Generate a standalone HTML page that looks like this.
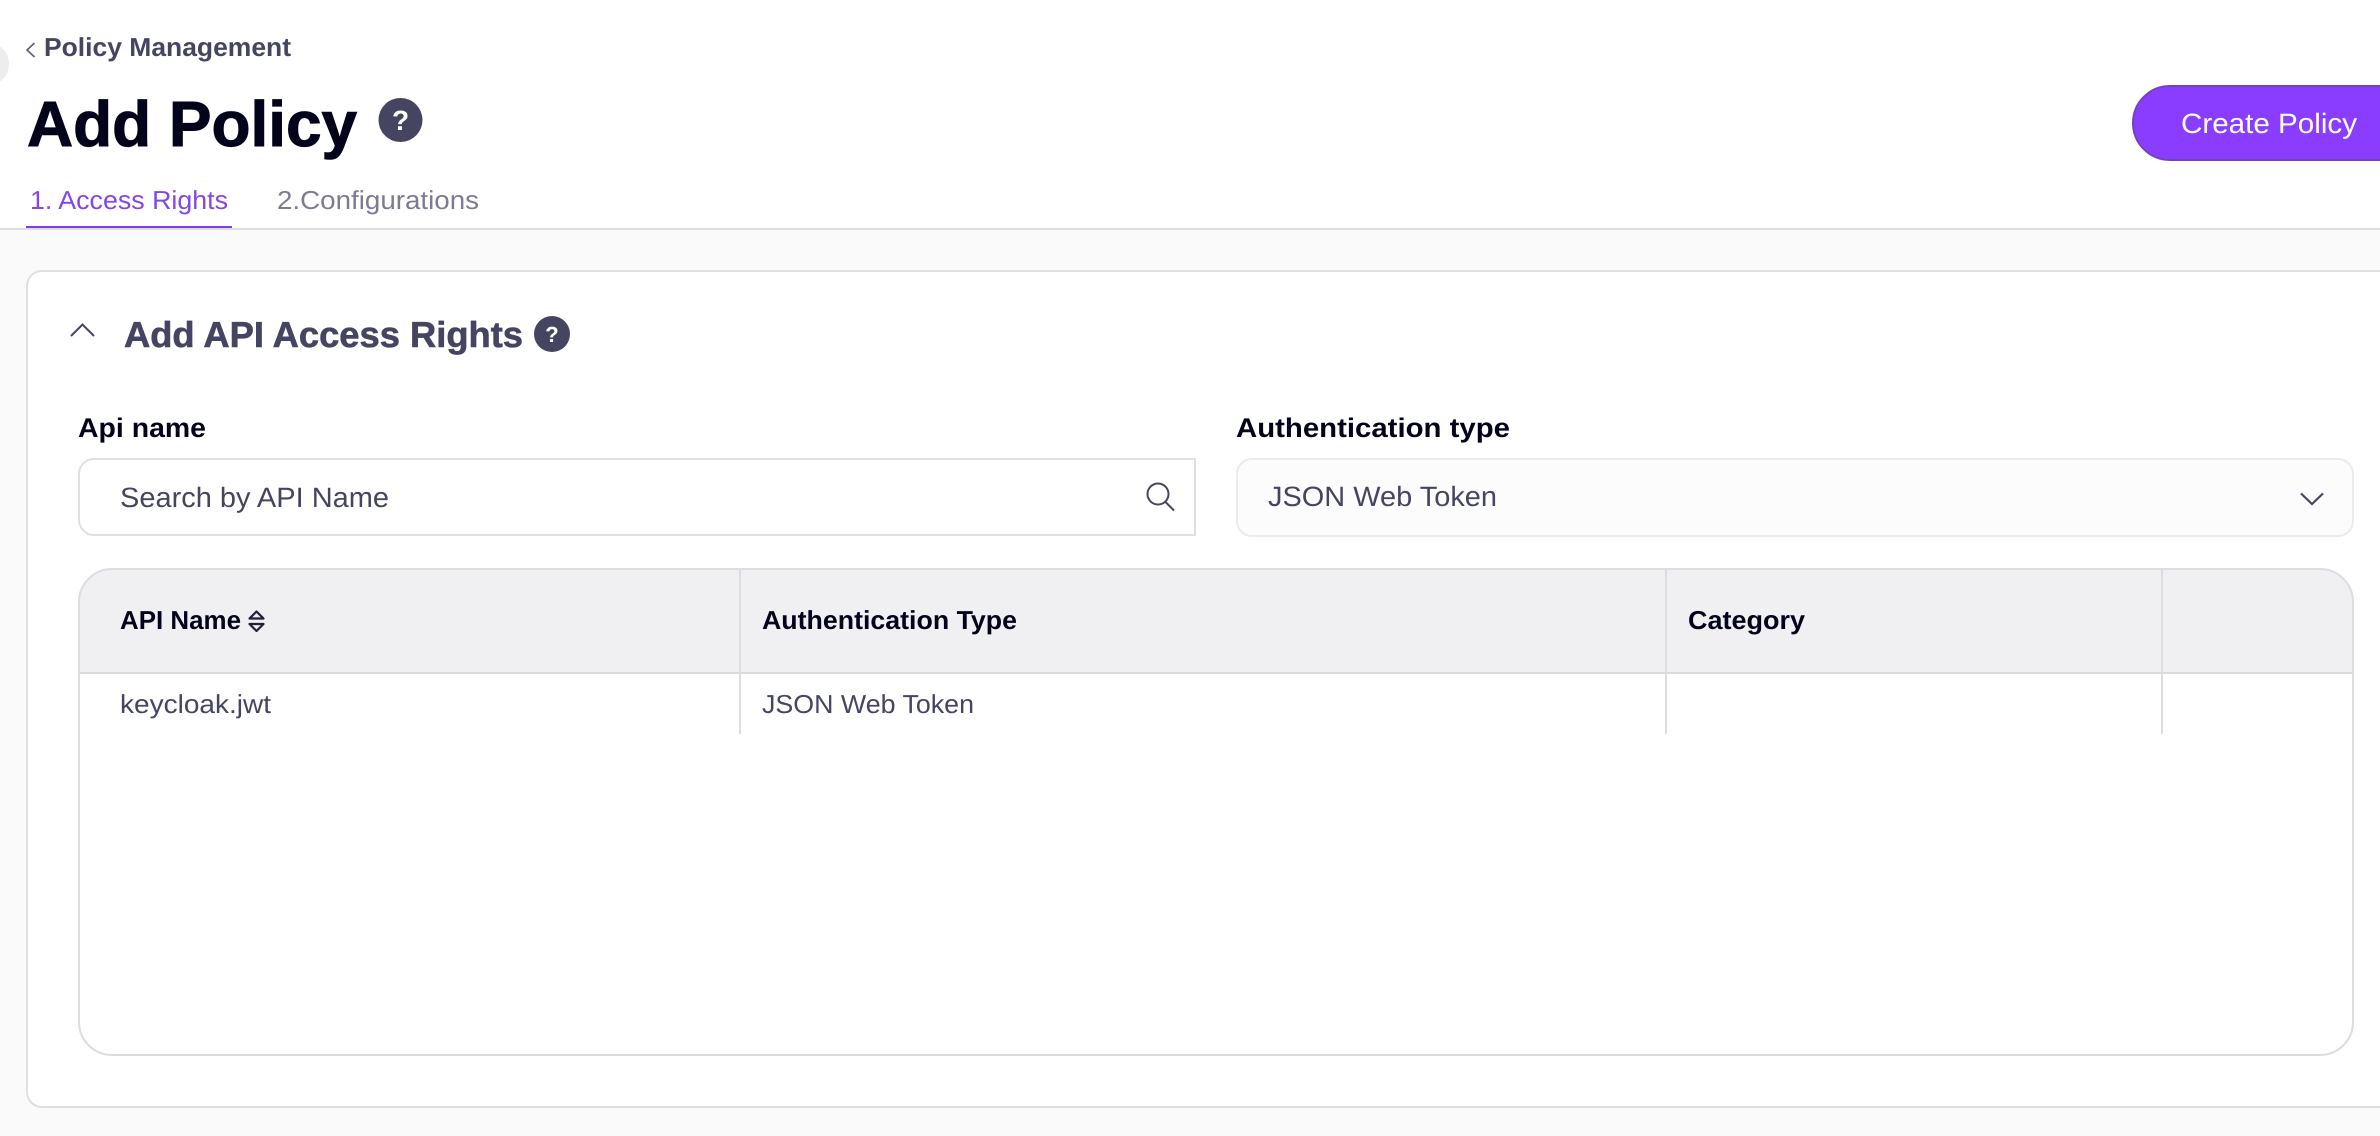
<!DOCTYPE html>
<html lang="en">
<head>
<meta charset="utf-8">
<title>Add Policy</title>
<style>
html,body{margin:0;padding:0;background:#fafafb;width:2380px;height:1136px;overflow:hidden}
svg{display:block}
text{font-family:"Liberation Sans",Arial,sans-serif;text-rendering:geometricPrecision}
</style>
</head>
<body>
<svg xmlns="http://www.w3.org/2000/svg" width="2380" height="1136" viewBox="0 0 2380 1136">
  <rect width="2380" height="1136" fill="#fafafb"/>
  <rect width="2380" height="229" fill="#ffffff"/>
  <rect x="0" y="228" width="2380" height="2" fill="#dcdce1"/>
  <circle cx="-13" cy="64" r="22" fill="#ededf0"/>

  <path d="M34.5 43 L27 50 L34.5 57" fill="none" stroke="#5a5a74" stroke-width="1.6"/>
  <text x="44" y="56" font-size="26" font-weight="700" fill="#454562" textLength="247" lengthAdjust="spacingAndGlyphs">Policy Management</text>

  <text x="27" y="146" font-size="64" font-weight="700" fill="#03031c" stroke="#03031c" stroke-width="1" textLength="330" lengthAdjust="spacingAndGlyphs">Add Policy</text>
  <circle cx="400.5" cy="120" r="22" fill="#454562"/>
  <text x="400.5" y="130" font-size="28" font-weight="700" fill="#ffffff" text-anchor="middle">?</text>

  <rect x="2133" y="86" width="300" height="74" rx="37" fill="#8b3dff" stroke="#7440c4" stroke-width="2"/>
  <text x="2181" y="133" font-size="28" fill="#ffffff" textLength="176" lengthAdjust="spacingAndGlyphs">Create Policy</text>

  <text x="30" y="209" font-size="26" fill="#8347e6" textLength="198" lengthAdjust="spacingAndGlyphs">1. Access Rights</text>
  <text x="277" y="209" font-size="26" fill="#7d7a92" textLength="202" lengthAdjust="spacingAndGlyphs">2.Configurations</text>
  <rect x="26" y="226" width="206" height="2" fill="#7c3ee0"/>

  <rect x="27" y="271" width="2500" height="836" rx="15" fill="#ffffff" stroke="#dfdfe4" stroke-width="2"/>
  <path d="M71 336 L82.5 324.5 L94 336" fill="none" stroke="#454562" stroke-width="2"/>
  <text x="124" y="347" font-size="36" font-weight="700" fill="#454562" stroke="#454562" stroke-width="0.6" textLength="399" lengthAdjust="spacingAndGlyphs">Add API Access Rights</text>
  <circle cx="552" cy="334" r="18" fill="#454562"/>
  <text x="552" y="342" font-size="22" font-weight="700" fill="#ffffff" text-anchor="middle">?</text>

  <text x="78" y="437" font-size="27" font-weight="700" fill="#03031c" textLength="128" lengthAdjust="spacingAndGlyphs">Api name</text>
  <path d="M1195 459 H94 A15 15 0 0 0 79 474 V520 A15 15 0 0 0 94 535 H1195 Z" fill="#ffffff" stroke="#e0e0e4" stroke-width="2"/>
  <text x="120" y="507" font-size="28" fill="#454562" textLength="269" lengthAdjust="spacingAndGlyphs">Search by API Name</text>
  <circle cx="1158" cy="494" r="10.5" fill="none" stroke="#454562" stroke-width="2"/>
  <path d="M1165.5 502 L1174 510.5" fill="none" stroke="#454562" stroke-width="2"/>

  <text x="1236" y="437" font-size="27" font-weight="700" fill="#03031c" textLength="274" lengthAdjust="spacingAndGlyphs">Authentication type</text>
  <rect x="1237" y="459" width="1116" height="77" rx="15" fill="#fcfcfd" stroke="#ebebee" stroke-width="2"/>
  <text x="1268" y="506" font-size="28" fill="#454562" textLength="229" lengthAdjust="spacingAndGlyphs">JSON Web Token</text>
  <path d="M2301 493.5 L2312 504 L2323 493.5" fill="none" stroke="#454562" stroke-width="2.2"/>

  <rect x="79" y="569" width="2274" height="486" rx="33" fill="#ffffff"/>
  <path d="M79 673 V602 A33 33 0 0 1 112 569 H2320 A33 33 0 0 1 2353 602 V673 Z" fill="#f0f0f3"/>
  <rect x="79" y="569" width="2274" height="486" rx="33" fill="none" stroke="#dcdce1" stroke-width="2"/>
  <rect x="79" y="672" width="2274" height="2" fill="#dcdce1"/>
  <rect x="739" y="570" width="2" height="164" fill="#dcdce1"/>
  <rect x="1665" y="570" width="2" height="164" fill="#dcdce1"/>
  <rect x="2161" y="570" width="2" height="164" fill="#dcdce1"/>

  <text x="120" y="629" font-size="26" font-weight="700" fill="#03031c" textLength="121" lengthAdjust="spacingAndGlyphs">API Name</text>
  <path d="M249.5 618.5 L256.5 611.5 L263.5 618.5 Z" fill="#efeff2" stroke="#1f1f38" stroke-width="2.2" stroke-linejoin="round"/>
  <path d="M249.5 624 H263.5 L256.5 631 Z" fill="#efeff2" stroke="#1f1f38" stroke-width="2.2" stroke-linejoin="round"/>
  <text x="762" y="629" font-size="26" font-weight="700" fill="#03031c" textLength="255" lengthAdjust="spacingAndGlyphs">Authentication Type</text>
  <text x="1688" y="629" font-size="26" font-weight="700" fill="#03031c" textLength="117" lengthAdjust="spacingAndGlyphs">Category</text>

  <text x="120" y="713" font-size="26" fill="#454562" textLength="151" lengthAdjust="spacingAndGlyphs">keycloak.jwt</text>
  <text x="762" y="713" font-size="26" fill="#454562" textLength="212" lengthAdjust="spacingAndGlyphs">JSON Web Token</text>
</svg>
</body>
</html>
